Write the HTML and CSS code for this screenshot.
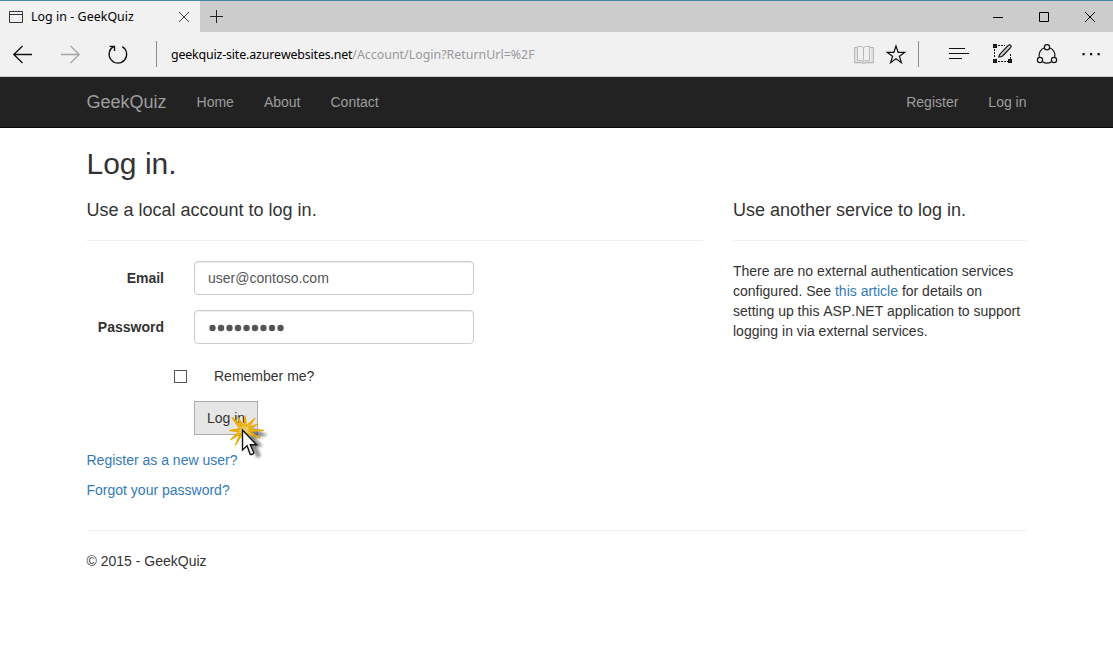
FILE: index.html
```html
<!DOCTYPE html>
<html lang="en">
<head>
<meta charset="utf-8">
<title>Log in - GeekQuiz</title>
<link rel="stylesheet" href="styles.css">
</head>
<body>
<header class="browser">
  <div class="tabbar">
    <div class="tab">
      <svg class="tab-icon" width="14" height="12" viewBox="0 0 14 12" fill="none" stroke="#333"><path d="M.5 .5h13v11H.5zM.5 3.5h13"/></svg>
      <span class="tab-title">Log in - GeekQuiz</span>
      <svg class="tab-close" width="12" height="12" viewBox="0 0 12 12" stroke="#444"><path d="M1 1l10 10M11 1L1 11"/></svg>
    </div>
    <svg class="tab-new" width="13" height="13" viewBox="0 0 13 13" stroke="#222"><path d="M6.500 0v13M0 6.500h13"/></svg>
    <div class="window-controls">
      <svg width="10" height="10" viewBox="0 0 10 10" stroke="#000"><path d="M0 5.500h10"/></svg>
      <svg width="10" height="10" viewBox="0 0 10 10" stroke="#000" fill="none"><path d="M.5 .5h9v9h-9z"/></svg>
      <svg width="10" height="10" viewBox="0 0 10 10" stroke="#000"><path d="M0 0l10 10M10 0L0 10"/></svg>
    </div>
  </div>
  <div class="toolbar">
    <svg class="chrome-icons" width="160" height="46" viewBox="0 31 160 46" fill="none" stroke="#111" stroke-width="1.300">
      <path d="M32 54.500H13.500M22.500 46l-8.700 8.500 8.700 8.500"/>
      <path stroke="#a5a5a5" d="M61 54.500h18.500M70.500 46l8.700 8.500-8.700 8.500"/>
      <path d="M122.200 46.600a8.800 8.800 0 1 1-8.300-.2M109.600 46.300h4.900v4.800"/>
      <path stroke="#8b8b8b" stroke-width="1" d="M156.500 41v26"/>
    </svg>
    <div class="url">geekquiz-site.azurewebsites.net<span class="url-path">/Account/Login?ReturnUrl=%2F</span></div>
    <svg class="chrome-icons tools" width="273" height="46" viewBox="840 31 273 46" fill="none" stroke="#111" stroke-width="1.200">
      <path stroke="#e0e0e0" stroke-width="3" d="M855.500 47.500v15h17v-15"/>
      <path stroke="#b9b9b9" stroke-width="1" d="M863.500 48v12.500M863.500 48q-1-1.500-2.500-1.500h-3.500v14h4l2 1 2-1h4v-14H866q-1.500 0-2.500 1.500M857 47.500h-2.500v15h7.500l2 1 2-1h7.500v-15H870"/>
      <path d="M896 46l2.100 6.300h6.700l-5.400 4 2 6.400-5.400-3.900-5.400 3.900 2-6.400-5.400-4h6.700z"/>
      <path stroke="#8b8b8b" stroke-width="1" d="M918.500 41v26"/>
      <path d="M949 48.500h16M949 53.500h20M949 58.500h13"/>
      <path stroke-width="1" stroke-dasharray="2 1" d="M998 45.500h7M994.500 49v9M998 61.500h10M1010.500 54v5"/>
      <path stroke="none" fill="#111" d="M993 44h4v4h-4zM993 59h4v4h-4zM1008 59h4v4h-4z"/>
      <path stroke="none" fill="#777" d="M994.500 45.500h1v1h-1zM994.500 60.500h1v1h-1zM1009.500 60.500h1v1h-1z"/>
      <path fill="#ccc" d="M1000.400 53.600l8-8.400q1.500-.8 2.400.2.700 1-.2 2.200l-8 8.300q-1.800 1-3.800 1.100.4-1.900 1.600-3.400z"/>
      <path d="M1044.500 47.800a8 8 0 0 0-5.300 9M1049.500 47.800a8 8 0 0 1 5.300 9M1042.500 61.700a8 8 0 0 0 9 0"/>
      <circle cx="1047" cy="47.300" r="2.600"/><circle cx="1040" cy="60" r="2.600"/><circle cx="1054" cy="60" r="2.600"/>
      <path stroke="none" fill="#111" d="M1082.500 53h2.200v2.200h-2.200zM1090 53h2.200v2.200h-2.200zM1097.500 53h2.200v2.200h-2.200z"/>
    </svg>
  </div>
</header>
<nav class="navbar">
  <a class="brand">GeekQuiz</a>
  <a class="nav-link">Home</a>
  <a class="nav-link">About</a>
  <a class="nav-link">Contact</a>
  <a class="nav-link nav-right">Register</a>
  <a class="nav-link">Log in</a>
</nav>
<main class="container">
  <h2 class="title">Log in.</h2>
  <div class="columns">
    <section class="local">
      <h4 class="subtitle">Use a local account to log in.</h4>
      <hr class="rule">
      <div class="form-row"><label class="label">Email</label><div class="field">user@contoso.com</div></div>
      <div class="form-row"><label class="label">Password</label><div class="field"><svg class="dots" width="76" height="8" viewBox="0 0 76 8" fill="#555"><circle cx="3.500" cy="4" r="3.200"/><circle cx="12" cy="4" r="3.200"/><circle cx="20.500" cy="4" r="3.200"/><circle cx="29" cy="4" r="3.200"/><circle cx="37.500" cy="4" r="3.200"/><circle cx="46" cy="4" r="3.200"/><circle cx="54.500" cy="4" r="3.200"/><circle cx="63" cy="4" r="3.200"/><circle cx="71.500" cy="4" r="3.200"/></svg></div></div>
      <div class="remember"><span class="checkbox"></span><span>Remember me?</span></div>
      <div class="button">Log in
        <svg class="pointer" width="50" height="60" viewBox="225 405 50 60">
          <defs><filter id="soft" x="-50%" y="-50%" width="200%" height="200%"><feGaussianBlur stdDeviation="1.600"/></filter></defs>
          <path fill="#000" opacity=".45" filter="url(#soft)" d="M249 432l14 14-6 1 4 9-4 2-4-8-4 4zM250 427l18 8-16 4z"/>
          <path fill="#e9cf62" stroke="#eba900" stroke-width="1.300" stroke-linejoin="round" d="M232 417.500L241.500 427 237.500 417 244 426.500 245 416 246.500 426 254.800 418.500 248.500 427.500 257.500 424 249 429.500 263.500 430.300 249 431.500 260 438 246 433 243 433 235.500 445 240.500 433.500 231 439.500 239 431.500 230 430.500 240 429z"/>
          <path fill="#fff" stroke="#111" stroke-width="1.400" d="M242.500 430v20l4.600-4.200 3.200 8.600q2.200.7 3.600-1.500l-3.600-8.200h6.200z"/>
        </svg>
      </div>
      <p class="links first"><a class="link">Register as a new user?</a></p>
      <p class="links"><a class="link">Forgot your password?</a></p>
    </section>
    <section class="other">
      <h4 class="subtitle">Use another service to log in.</h4>
      <hr class="rule">
      <p class="info">There are no external authentication services<br>configured. See <a class="link">this article</a> for details on<br>setting up this ASP.NET application to support<br>logging in via external services.</p>
    </section>
  </div>
  <hr class="rule footer-rule">
  <footer>© 2015 - GeekQuiz</footer>
</main>
</body>
</html>
```
FILE: styles.css
```css
* { box-sizing: border-box; }
body { margin: 0; height: 647px; overflow: hidden; background: #fff; color: #333; font: 14px/20px "Liberation Sans", Arial, sans-serif; font-kerning: none; }
svg { display: block; flex: none; }
h2, h4, p { margin: 0; font-weight: 400; }
.browser { font-family: "Noto Sans", sans-serif; color: #000; }
.tabbar { display: flex; align-items: center; height: 32px; background: #ccc; border-top: 1px solid #3f8aa5; }
.tab { display: flex; align-items: center; width: 200px; height: 31px; padding: 0 10px 0 9px; background: #f1f1f1; }
.tab-title { margin-left: 8px; font-size: 12.400px; letter-spacing: .05px; white-space: nowrap; }
.tab-close { margin-left: auto; }
.tab-new { margin-left: 10px; }
.window-controls { display: flex; gap: 36px; margin: 0 18px 0 auto; }
.toolbar { display: flex; height: 45px; align-items: center; background: #f1f1f1; border-bottom: 1px solid #c5c9c9; }
.chrome-icons { margin-top: -1px; }
.url { margin-left: 11px; padding-top: 2px; font-size: 12.400px; letter-spacing: -.16px; white-space: nowrap; }
.url-path { color: #999; letter-spacing: .01px; }
.tools { margin-left: auto; }
.navbar { display: flex; align-items: center; gap: 30px; height: 51px; padding: 0 86.500px; background: #222; border-bottom: 1px solid #080808; color: #9d9d9d; }
.brand { font-size: 18px; }
.nav-right { margin-left: auto; }
.container { width: 940px; margin-left: 86.500px; }
.title { padding-top: 19px; font-size: 30px; line-height: 33px; }
.columns { display: flex; gap: 30px; }
.local { width: 616.500px; }
.other { width: 293.500px; }
.subtitle { margin-top: 20px; font-size: 18px; line-height: 20px; }
.rule { margin: 20px 0; border: 0; border-top: 1px solid #eee; }
.form-row { display: flex; gap: 30px; margin-bottom: 15px; }
.label { width: 77.500px; padding-top: 7px; text-align: right; font-weight: 700; }
.field { width: 280px; height: 34px; padding: 6px 13px; border: 1px solid #ccc; border-radius: 4px; color: #555; box-shadow: inset 0 1px 1px rgba(0,0,0,.075); }
.dots { margin: 7px 0 0 1px; }
.remember { display: flex; align-items: center; gap: 27px; margin: 22px 0 15px 87.500px; }
.checkbox { width: 13px; height: 13px; border: 1px solid #555; }
.button { position: relative; width: 64px; height: 34px; margin-left: 107.500px; padding: 6px 12px; border: 1px solid #adadad; background: #e6e6e6; white-space: nowrap; }
.pointer { position: absolute; left: 30px; top: 3px; }
.links { margin-top: 10px; }
.first { margin-top: 15px; }
.link { color: #337ab7; }
.footer-rule { margin: 30px 0 20px; }
```
